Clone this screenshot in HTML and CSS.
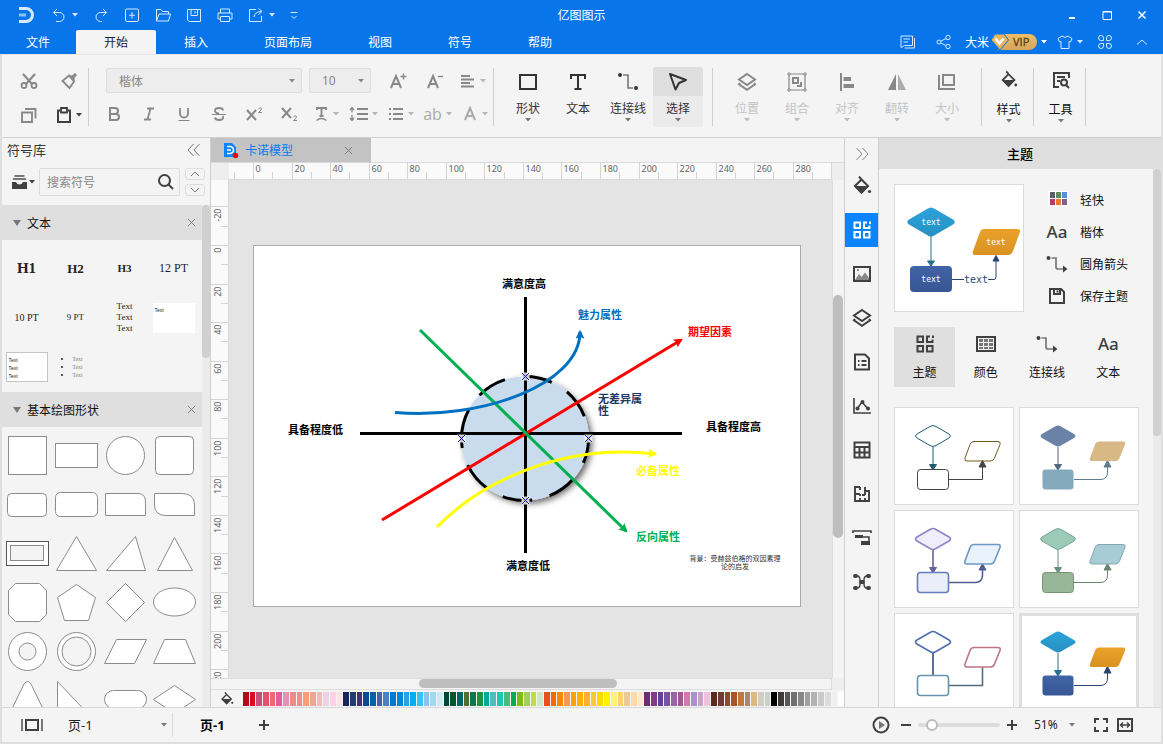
FILE: index.html
```html
<!DOCTYPE html>
<html lang="zh-CN">
<head>
<meta charset="utf-8">
<title>亿图图示</title>
<link rel="stylesheet" href="styles.css">
</head>
<body>
<svg class="defs" aria-hidden="true">
  <defs>
    <linearGradient id="g-blue" x1="0" y1="0" x2="0" y2="1"><stop offset="0" stop-color="#2ba3da"/><stop offset="1" stop-color="#2690c2"/></linearGradient>
    <linearGradient id="g-orange" x1="0" y1="0" x2="0" y2="1"><stop offset="0" stop-color="#eaa22b"/><stop offset="1" stop-color="#d99220"/></linearGradient>
    <linearGradient id="g-navy" x1="0" y1="0" x2="0" y2="1"><stop offset="0" stop-color="#4064a6"/><stop offset="1" stop-color="#385693"/></linearGradient>
    <linearGradient id="g-gold" x1="0" y1="0" x2="0" y2="1"><stop offset="0" stop-color="#f0bd64"/><stop offset="1" stop-color="#d4a55c"/></linearGradient>
  </defs>
  <symbol id="arrow" viewBox="0 0 6 4"><path d="M0 0H6L3 3.5Z" fill="currentColor"/></symbol>
  <symbol id="close" viewBox="0 0 10 10"><path d="M1 1L9 9M9 1L1 9"/></symbol>
  <symbol id="connector" viewBox="0 0 20 20"><g stroke="none" fill="currentColor"><circle cx="2" cy="3" r="2"/><circle cx="18" cy="16" r="2"/></g><path d="M5 3H10V16H15" stroke="#777" stroke-width="1.6"/></symbol>
  <symbol id="connector-arrow" viewBox="0 0 22 18"><g stroke="none" fill="currentColor"><circle cx="2.500" cy="3" r="2"/><path d="M17 10.500L21.500 14L17 17.500Z"/></g><path d="M5.500 3H10V12Q10 14 12 14H17" stroke="#777" stroke-width="1.700"/></symbol>
  <symbol id="layers" viewBox="0 0 20 20"><path d="M10 2L18 7.500L10 13L2 7.500Z"/><path d="M3 11L2 12.200L10 17.800L18 12.200L17 11"/></symbol>
  <symbol id="bucket" viewBox="0 0 20 20"><path d="M7 0.500L9.500 3.500M9.500 3.500L3 10L9.500 16.500L16 10Z"/><path d="M2 10H17L9.500 18Z" fill="currentColor" stroke="none"/><circle cx="17.500" cy="15.500" r="1.600" fill="currentColor" stroke="none"/></symbol>
  <symbol id="themes" viewBox="0 0 18 18"><path d="M1.500 1.500H7V7H1.500ZM1.500 11H7V16.500H1.500ZM11 11H16.500V16.500H11ZM14 1.500H11V7H16.500V4.500"/><path d="M16 0.500H18V3H16Z" fill="currentColor" stroke="none"/></symbol>
  <symbol id="disk" viewBox="0 0 16 16"><path d="M1 1H12L15 4V15H1ZM5 1V6H11V1M8.500 2.500V4.500"/></symbol>
  <symbol id="diagram" viewBox="0 0 120 98">
    <path class="t-down" d="M39 40V62"/><path class="t-down-head" d="M35.500 57.500H42.500L39 63Z"/><path class="t-up-head" d="M85 60H92L88.500 53.500Z"/>
    <path class="t-diamond" d="M36 19.500Q39 17.500 42 19.500L55 27Q58 29 55 31L42 38.500Q39 40.500 36 38.500L23 31Q20 29 23 27Z"/>
    <rect class="t-rect" x="23.500" y="62.500" width="31" height="20" rx="3"/>
    <path class="t-para" d="M80 34.500H104Q107 34.500 106 37.500L100.500 51Q99.500 54 96.500 54H73Q70 54 71 51L76 37.500Q77 34.500 80 34.500Z"/>
  </symbol>
</svg>

<header class="top">
  <div class="titlebar">
    <div class="quick">
      <svg class="logo" width="18" height="16" viewBox="0 0 18 16" aria-label="Edraw"><path d="M1 1.500H8A6.500 6.500 0 0 1 8 14.500H1" stroke-width="3"/><path d="M1 8H8" stroke-width="3" stroke="#8cc4f7"/></svg>
      <button class="combo" aria-label="撤销"><svg width="16" height="16"><path d="M6 2L2.500 5.500L6 9M3 5.500H8.500A4.500 4.500 0 0 1 8.500 14.500H5"/></svg><svg class="ar"><use href="#arrow"/></svg></button>
      <button aria-label="重做"><svg width="16" height="16"><path d="M10 2L13.500 5.500L10 9M13 5.500H7.500A4.500 4.500 0 0 0 7.500 14.500H9"/></svg></button>
      <button aria-label="新建"><svg width="16" height="16"><path d="M3 2H13Q14.500 2 14.500 3V13Q14.500 14.500 13 14.500H3Q1.500 14.500 1.500 13V3Q1.500 2 3 2ZM8 5V11.500M5 8.200H11"/></svg></button>
      <button aria-label="打开"><svg width="16" height="16"><path d="M1.500 14V2.500H6L7.500 4.500H13.500V7M1.500 14L4 7H15.500L13.500 14Z"/></svg></button>
      <button aria-label="保存"><svg width="16" height="16"><path d="M1.500 2.500H14.500V14.500H3L1.500 13ZM5 2.500V8.500H11.500V2.500M9 4V6.500"/></svg></button>
      <button aria-label="打印"><svg width="16" height="16"><path d="M3.500 6V2H12.500V6M3.500 12H1V6H15V12H12.500M3.500 9.500H12.500V14.500H3.500Z"/></svg></button>
      <button class="combo" aria-label="导出"><svg width="16" height="16"><path d="M8 2.500H1.500V14.500H13.500V9M6 10Q7 4.500 13.500 4.500M10.500 1.500L14 4.500L10.500 7.500"/></svg><svg class="ar"><use href="#arrow"/></svg></button>
      <button aria-label="自定义"><svg width="8" height="16"><path d="M0.500 5.500H7.500M1.500 9L4 11.500L6.500 9"/></svg></button>
    </div>
    <h1>亿图图示</h1>
    <div class="window">
      <button aria-label="最小化"><svg width="12" height="12"><path d="M3 9H9" stroke-width="2"/></svg></button>
      <button aria-label="最大化"><svg width="12" height="12"><path d="M2 2.500H10.500V10.500H2Z M2 3H10.500"/></svg></button>
      <button aria-label="关闭"><svg width="12" height="12"><path d="M2.500 2.500L9.500 9.500M9.500 2.500L2.500 9.500" stroke-width="1.600"/></svg></button>
    </div>
  </div>
  <nav class="menu">
    <button class="file">文件</button><button class="on">开始</button><button>插入</button><button>页面布局</button><button>视图</button><button>符号</button><button>帮助</button>
    <div class="account">
      <button aria-label="消息"><svg width="16" height="16"><path d="M1 2H12.500V11.500H4.500L1 13.500ZM3.500 5H10M3.500 8H8M14.500 4V14H4.500"/></svg></button>
      <button aria-label="分享" class="share"><svg width="16" height="16"><circle cx="3" cy="8" r="2"/><circle cx="12" cy="3.500" r="2.200"/><circle cx="12" cy="12.500" r="2.200"/><path d="M5 7L10 4.500M5 9L10 11.500"/></svg></button>
      <button class="combo vip"><span>大米</span><svg width="50" height="18"><path d="M11 1H40A8 8 0 0 1 40 17H9Z" fill="url(#g-gold)" stroke="none"/><path d="M6 1H15L19.500 7L11 17L2 7Z" fill="#e5b55f" stroke="#0876ea" stroke-width="1"/><path d="M6.500 5.500L10.500 10.500L14.500 5.500" stroke="#fff" stroke-width="2.500"/><text x="24" y="13">VIP</text></svg><svg class="ar"><use href="#arrow"/></svg></button>
      <button class="combo skin" aria-label="皮肤"><svg width="16" height="16"><path d="M5 2L1 4.500L2.500 8L4 7.500V14.500H12V7.500L13.500 8L15 4.500L11 2Q8 5 5 2Z"/></svg><svg class="ar"><use href="#arrow"/></svg></button>
      <button class="apps" aria-label="应用"><svg width="16" height="16"><path d="M6.500 6.500H4A2.500 2.500 0 1 1 6.500 4ZM9.500 6.500V4A2.500 2.500 0 1 1 12 6.500ZM6.500 9.500V12A2.500 2.500 0 1 1 4 9.500ZM9.500 9.500H12A2.500 2.500 0 1 1 9.500 12Z"/></svg></button>
      <button aria-label="收起功能区"><svg width="12" height="12"><path d="M1 8.500L6 4L11 8.500"/></svg></button>
    </div>
  </nav>
</header>

<div class="frame">
<section class="ribbon" aria-label="开始">
  <div class="clip">
    <button aria-label="剪切"><svg width="18" height="18"><path d="M3 2L12 12M15 2L6 12" stroke-width="2"/><circle cx="4" cy="13.500" r="2.500" stroke-width="1.800"/><circle cx="14" cy="13.500" r="2.500" stroke-width="1.800"/></svg></button>
    <button aria-label="格式刷"><svg width="18" height="18"><path d="M2.500 9L9 3.500L14 9.500L9.500 16Z" stroke-width="1.800"/><path d="M8 3L12 3.500L15 1L17 3L14.500 6L15 10Z" fill="currentColor" stroke="none"/></svg></button>
    <button aria-label="复制"><svg width="18" height="18"><path d="M2 6.500H12V16H2ZM5 3H15.500V12.500" stroke-width="1.900"/></svg></button>
    <button class="combo dark" aria-label="粘贴"><svg width="16" height="18"><path d="M2 4.500H14V16H2Z" stroke-width="2"/><path d="M5 2H11V6.500H5Z" fill="#f4f4f4" stroke-width="1.800"/></svg><svg class="ar"><use href="#arrow"/></svg></button>
  </div>
  <i class="sep"></i>
  <div class="font">
    <div class="row one">
      <label class="pick family"><select aria-label="字体"><option>楷体</option></select><svg class="ar"><use href="#arrow"/></svg></label>
      <label class="pick size"><select aria-label="字号"><option>10</option></select><svg class="ar"><use href="#arrow"/></svg></label>
      <button class="c37" aria-label="增大字号"><svg width="18" height="18"><path d="M1 16L6 4L11 16M3 12H9" stroke-width="2"/><path d="M10.500 4.500H16.500M13.500 1.500V7.500" stroke-width="1.400"/></svg></button>
      <button class="c37" aria-label="减小字号"><svg width="18" height="18"><path d="M1 16L6 4L11 16M3 12H9" stroke-width="2"/><path d="M11 4.500H16" stroke-width="1.400"/></svg></button>
      <button class="c37 combo" aria-label="对齐方式"><svg width="16" height="16"><path d="M1 3H10M1 6.500H14M1 10H10M1 13.500H14" stroke-width="1.900"/></svg><svg class="ar"><use href="#arrow"/></svg></button>
    </div>
    <div class="row two">
      <button class="c35" aria-label="加粗"><svg width="16" height="16"><path d="M4 2H9A3 3 0 0 1 9 8H4ZM4 8H10A3 3 0 0 1 10 14H4Z" stroke-width="2"/></svg></button>
      <button class="c35" aria-label="斜体"><svg width="16" height="16"><path d="M6 2.500H13M3 13.500H10M9.500 2.500L6.500 13.500" stroke-width="1.800"/></svg></button>
      <button class="c35" aria-label="下划线"><svg width="16" height="16"><path d="M4 2V7.500A4 4 0 0 0 12 7.500V2" stroke-width="1.800"/><path d="M2.500 14.500H13.500"/></svg></button>
      <button class="c35" aria-label="删除线"><svg width="16" height="16"><path d="M12 4.500A4 2.500 0 0 0 4 4.500Q4 7 8 7.500M12 10Q13 14 8 14Q4.500 14 4 11.500" stroke-width="1.800"/><path d="M1 8.500H15"/></svg></button>
      <button class="c35" aria-label="上标"><svg width="18" height="16"><path d="M2 4L11 14M11 4L2 14" stroke-width="2"/><path d="M13.500 3Q15 0.500 16.500 2.500Q17 4 13.500 6.500H17"/></svg></button>
      <button class="c35" aria-label="下标"><svg width="18" height="16"><path d="M2 2L11 12M11 2L2 12" stroke-width="2"/><path d="M13.500 11Q15 8.500 16.500 10.500Q17 12 13.500 14.500H17"/></svg></button>
      <i class="gap"></i>
      <button class="c37 combo" aria-label="文字效果"><svg width="15" height="16"><path d="M3 4V2H12V4M7.500 2V10M5.500 10H9.500" stroke-width="1.900"/><path d="M2.500 14.500Q7.500 10.500 12.500 14.500" stroke-width="1.400"/></svg><svg class="ar"><use href="#arrow"/></svg></button>
      <button class="c37 combo" aria-label="行距"><svg width="19" height="16"><path d="M8 3H19M8 8H19M8 13H19" stroke-width="2"/><path d="M3 2V6.500M1 4L3 1.500L5 4M3 9V14M1 12L3 14.500L5 12" stroke-width="1.300"/></svg><svg class="ar"><use href="#arrow"/></svg></button>
      <button class="c37 combo" aria-label="列表"><svg width="16" height="16"><path d="M5 3H15M5 8H15M5 13H15M1 3H3M1 8H3M1 13H3" stroke-width="2"/></svg><svg class="ar"><use href="#arrow"/></svg></button>
      <button class="c37 combo light"><span>ab</span><svg class="ar"><use href="#arrow"/></svg></button>
      <button class="c37 combo light" aria-label="字体颜色"><svg width="16" height="16"><path d="M3 14L8 2L13 14M5 10H11" stroke-width="2"/></svg><svg class="ar"><use href="#arrow"/></svg></button>
    </div>
  </div>
  <i class="sep"></i>
  <div class="big tools">
    <button><svg width="20" height="20"><path d="M2 3H18V17H2Z"/></svg>形状<svg class="ar"><use href="#arrow"/></svg></button>
    <button><svg width="20" height="20"><path d="M3 7V3H17V7M10 3V17M6.500 17H13.500"/></svg>文本</button>
    <button><svg width="20" height="20"><use href="#connector"/></svg>连接线<svg class="ar"><use href="#arrow"/></svg></button>
    <button class="on"><svg width="20" height="20"><path d="M2 2L18 8L11 11L7.500 17.500Z" stroke-linejoin="round"/></svg>选择<svg class="ar"><use href="#arrow"/></svg></button>
  </div>
  <i class="sep"></i>
  <div class="big off">
    <button><svg width="20" height="20"><use href="#layers"/></svg>位置<svg class="ar"><use href="#arrow"/></svg></button>
    <button><svg width="20" height="20"><path d="M2 2H18V18H2Z" stroke-width="1.200"/><path d="M1 1H3V3H1ZM17 1H19V3H17ZM1 17H3V19H1ZM17 17H19V19H17Z" stroke-width="1" fill="#f4f4f4"/><path d="M6 6H11V11H6ZM14 10V14H10"/></svg>组合<svg class="ar"><use href="#arrow"/></svg></button>
    <button><svg width="20" height="20"><path d="M4 1V19"/><path d="M6.500 5H14V9H6.500ZM6.500 12H17V16H6.500Z" fill="currentColor" stroke="none"/></svg>对齐<svg class="ar"><use href="#arrow"/></svg></button>
    <button><svg width="20" height="20"><path d="M9 2V18H1Z" fill="currentColor" stroke="none"/><path d="M11 2V18H19Z" fill="#ababab" stroke="none"/></svg>翻转<svg class="ar"><use href="#arrow"/></svg></button>
    <button><svg width="20" height="20"><path d="M6 3H17V13H6ZM2 3V17H18"/></svg>大小<svg class="ar"><use href="#arrow"/></svg></button>
  </div>
  <i class="sep"></i>
  <div class="big wide">
    <button><svg width="18" height="18"><use href="#bucket"/></svg>样式<svg class="ar"><use href="#arrow"/></svg></button>
    <i class="sep"></i>
    <button><svg width="20" height="20"><path d="M18 8V3H3V17H8M6 7H14M6 11H9"/><circle cx="13" cy="12.500" r="3"/><path d="M15 15L18 18"/></svg>工具<svg class="ar"><use href="#arrow"/></svg></button>
    <i class="sep"></i>
  </div>
</section>

<main class="work">
  <aside class="library">
    <header><h2>符号库</h2><button aria-label="折叠"><svg width="14" height="14"><path d="M6.500 1L1 7L6.500 13M12.500 1L7 7L12.500 13"/></svg></button></header>
    <div class="find">
      <button class="combo dark" aria-label="符号库菜单"><svg width="15" height="14"><path d="M2.500 1H12.500M1 4H14" stroke-width="2" stroke="#777"/><path d="M0 7H4Q5 9.500 7.500 9.500Q10 9.500 11 7H15V14H0Z" fill="currentColor" stroke="none"/></svg><svg class="ar"><use href="#arrow"/></svg></button>
      <label class="search"><input type="text" placeholder="搜索符号" aria-label="搜索符号"><svg width="16" height="16"><circle cx="6.500" cy="6.500" r="5.500"/><path d="M10.500 10.500L15 15"/></svg></label>
      <div class="updown"><button aria-label="上一个"><svg width="10" height="6"><path d="M1 5L5 1L9 5"/></svg></button><button aria-label="下一个"><svg width="10" height="6"><path d="M1 1L5 5L9 1"/></svg></button></div>
    </div>
    <div class="sheets">
      <div class="list">
        <h3><svg width="8" height="6"><path d="M0 0H8L4 6Z"/></svg>文本<button aria-label="关闭文本"><svg width="9" height="9"><use href="#close"/></svg></button></h3>
        <div class="grid texts">
          <b class="h1">H1</b><b class="h2">H2</b><b class="h3">H3</b><span class="p12">12 PT</span>
          <span class="p10">10 PT</span><span class="p9">9 PT</span><span class="lines">Text<br>Text<br>Text</span><span class="box">Text</span>
          <span class="box line">Text<br>Text<br>Text</span><ul><li>Text</li><li>Text</li><li>Text</li></ul>
        </div>
        <h3><svg width="8" height="6"><path d="M0 0H8L4 6Z"/></svg>基本绘图形状<button aria-label="关闭基本绘图形状"><svg width="9" height="9"><use href="#close"/></svg></button></h3>
        <div class="grid shapes">
          <svg><rect x="6.500" y="5.500" width="38" height="38"/></svg>
          <svg><rect x="4.500" y="12.500" width="42" height="24"/></svg>
          <svg><circle cx="25.500" cy="24.500" r="19"/></svg>
          <svg><rect x="6.500" y="5.500" width="38" height="38" rx="4"/></svg>
          <svg><rect x="5.500" y="13.500" width="39" height="23" rx="4"/></svg>
          <svg><rect x="4.500" y="12.500" width="42" height="24" rx="5"/></svg>
          <svg><path d="M5.500 13.500H38Q45.500 13.500 45.500 22V35.500H5.500Z"/></svg>
          <svg><path d="M5.500 13.500H33Q45.500 13.500 45.500 25V35.500H17Q5.500 35.500 5.500 25Z"/></svg>
          <svg><rect x="4.500" y="12.500" width="42" height="24" stroke="#555"/><rect x="8.500" y="16.500" width="33" height="15" fill="#f4f4f4"/></svg>
          <svg><path d="M25.500 7.500L45.500 41.500H5.500Z"/></svg>
          <svg><path d="M35.500 7.500L45.500 41.500H6.500Z"/></svg>
          <svg><path d="M25.500 8.500L43.500 41.500H8.500Z"/></svg>
          <svg><path d="M13.500 5.500H37.500L44.500 12.500V36.500L37.500 43.500H13.500L6.500 36.500V12.500Z"/></svg>
          <svg><path d="M25.500 6.500L44.500 19.500L37.500 42.500H13.500L6.500 19.500Z"/></svg>
          <svg><path d="M25.500 5.500L44.500 24.500L25.500 43.500L6.500 24.500Z"/></svg>
          <svg><ellipse cx="25.500" cy="24" rx="21" ry="14"/></svg>
          <svg><circle cx="25.500" cy="24.500" r="19"/><circle cx="25.500" cy="24.500" r="8.500" fill="#f4f4f4"/></svg>
          <svg><circle cx="25.500" cy="24.500" r="19"/><circle cx="25.500" cy="24.500" r="14.500" fill="#f4f4f4"/></svg>
          <svg><path d="M16.500 12.500H46.500L34.500 36.500H4.500Z"/></svg>
          <svg><path d="M15.500 12.500H36.500L46.500 36.500H4.500Z"/></svg>
          <svg><path d="M5 43L22 8Q25.500 3 29 8L46 43Z"/></svg>
          <svg><path d="M6.500 5.500L42.500 43.500H6.500Z"/></svg>
          <svg><rect x="4.500" y="14.500" width="42" height="18" rx="9"/></svg>
          <svg><path d="M25.500 9.500L46.500 23.500L25.500 37.500L4.500 23.500Z"/></svg>
        </div>
      </div>
      <div class="track"><i></i></div>
    </div>
  </aside>

  <section class="editor">
    <div class="tabs"><div class="tab"><svg width="16" height="17"><path d="M1 1H9L13 5V15H1Z" fill="#0a84ff"/><path d="M4 4.500H7A3.500 3.500 0 0 1 7 11.500H4M4 8H8" fill="none" stroke="#fff" stroke-width="1.600"/><circle cx="12.500" cy="13.500" r="2.800" fill="red"/></svg><span>卡诺模型</span><button aria-label="关闭卡诺模型"><svg width="9" height="9"><use href="#close"/></svg></button></div></div>
    <div class="desk">
      <i class="corner"></i>
      <svg class="ruler across" id="ruler-x"></svg>
      <i class="corner"></i>
      <svg class="ruler down" id="ruler-y"></svg>
      <div class="canvas">
        <svg class="page" width="548" height="362" viewBox="254 246 546 360">
          <defs>
            <filter id="soft" x="-20%" y="-20%" width="140%" height="140%"><feDropShadow dx="3" dy="3" stdDeviation="3" flood-opacity=".6"/></filter>
            <marker id="tip" viewBox="0 0 8 8" refX="6" refY="4" markerWidth="9" markerHeight="9" markerUnits="userSpaceOnUse" orient="auto"><path d="M0 0L8 4L0 8L1.500 4Z" fill="context-stroke" stroke="none"/></marker>
            <g id="handle"><path d="M-4 -4H4V4H-4Z" fill="#fff" stroke="none" opacity=".8"/><path d="M-3.500 -3.500L3.500 3.500M3.500 -3.500L-3.500 3.500"/></g>
          </defs>
          <ellipse cx="525" cy="438.500" rx="64" ry="62" fill="#c9dcee" stroke="none" filter="url(#soft)"/>
          <path d="M461.500 438.500A63.500 62 0 0 1 588.500 438.500A63.500 62 0 0 1 461.500 438.500" stroke="#000" stroke-width="3" stroke-dasharray="30 18"/>
          <path d="M525.500 297V553M360 433.500H682" stroke="#000" stroke-width="3"/>
          <g stroke-width="3">
            <path d="M382 520L681 340" stroke="#f00" marker-end="url(#tip)"/>
            <path d="M420 330L626 531" stroke="#00b050" marker-end="url(#tip)"/>
            <path d="M395 412.500C480 420 580 385 580 332" stroke="#0070c0" marker-end="url(#tip)"/>
            <path d="M437 527C480 483 560 443 655 454" stroke="#ff0" marker-end="url(#tip)"/>
          </g>
          <g class="handles"><use href="#handle" x="525.500" y="376.500"/><use href="#handle" x="461.500" y="438.500"/><use href="#handle" x="588.500" y="438.500"/><use href="#handle" x="525.500" y="500.500"/></g>
          <g class="labels">
            <text x="502" y="288">满意度高</text><text x="506" y="570">满意度低</text>
            <text x="288" y="434">具备程度低</text><text x="706" y="431">具备程度高</text>
            <text x="578" y="319" fill="#0070c0">魅力属性</text><text x="688" y="336" fill="#f00">期望因素</text>
            <text x="598" y="403" fill="#1f3864">无差异属<tspan x="598" y="415">性</tspan></text>
            <text x="636" y="475" fill="#ff0">必备属性</text><text x="636" y="541" fill="#00b050">反向属性</text>
          </g>
          <text class="note" x="735" y="561">背景：受赫兹伯格的双因素理<tspan x="735" y="569">论的启发</tspan></text>
        </svg>
      </div>
      <div class="vbar"><i></i></div>
      <div class="hbar"><i></i></div>
      <i class="corner"></i>
      <div class="colors"><svg width="14" height="14"><use href="#bucket"/></svg><div id="swatches"></div></div>
    </div>
  </section>

  <nav class="dock">
    <button class="fold" aria-label="折叠面板"><svg width="14" height="14"><path d="M1.500 1L7 7L1.500 13M7.500 1L13 7L7.500 13"/></svg></button>
    <button aria-label="填充"><svg width="20" height="20"><use href="#bucket"/></svg></button>
    <button class="on" aria-label="主题"><svg width="18" height="18"><use href="#themes"/></svg></button>
    <button aria-label="图片"><svg width="20" height="18"><path d="M2 2H18V16H2Z"/><path d="M3 15L7 9L9.500 12L13 7.500L17 13V15Z" fill="#888" stroke="none"/><path d="M5 5H7" stroke="#888"/></svg></button>
    <button aria-label="图层"><svg width="20" height="20"><use href="#layers"/></svg></button>
    <button aria-label="文档"><svg width="18" height="18"><path d="M2 1.500H12L16 5.500V16.500H2ZM5 8H6.500M8.500 8H13.500M5 12H6.500M8.500 12H13.500"/></svg></button>
    <button aria-label="图表"><svg width="20" height="18"><path d="M2 1V16H19M5 12L10 5L16 12" stroke-width="1.600"/><g fill="currentColor" stroke="none"><circle cx="5.500" cy="11.500" r="2"/><circle cx="10.500" cy="5" r="2"/><circle cx="16" cy="11.500" r="2"/></g></svg></button>
    <button aria-label="表格"><svg width="18" height="18"><path d="M1.500 1.500H16.500V16.500H1.500ZM1.500 6H16.500M1.500 11.500H16.500M6.500 6V16.500M11.500 6V16.500"/></svg></button>
    <button aria-label="平面图"><svg width="18" height="18"><path d="M7 2H2V16H16V6H12M7 2V5M12 2V10M12 6H16M2 9H7M7 9V11M7 16V13M12 13V16M9 10H12" stroke-width="1.900"/></svg></button>
    <button aria-label="时间线"><svg width="20" height="18"><path d="M1 4V2H19V4M11 8H17V14" stroke-width="1.600"/><path d="M3 6H11V9H3ZM9 12H18V16H9Z" fill="currentColor" stroke="none"/></svg></button>
    <button aria-label="思维导图"><svg width="20" height="18"><path d="M5 3Q8 3 8 7L8 11Q8 15 5 15M15 3Q12 3 12 7L12 11Q12 15 15 15" stroke-width="1.400"/><g fill="currentColor" stroke="none"><rect x="1" y="1" width="5" height="4" rx="2"/><rect x="14" y="1" width="5" height="4" rx="2"/><rect x="1" y="13" width="5" height="4" rx="2"/><rect x="14" y="13" width="5" height="4" rx="2"/><rect x="7.500" y="7" width="5" height="4" rx="1"/></g></svg></button>
  </nav>

  <aside class="panel">
    <h2>主题</h2>
    <div class="scroll">
      <div class="inner">
        <div class="current">
          <svg class="preview" width="128" height="126" viewBox="1 1 128 126">
            <g stroke="#27708f" fill="#27708f"><path d="M37 52V77"/><path d="M33.500 77H40.500L37 82Z"/></g>
            <g stroke="#2c4372" fill="none"><path d="M58 95.500H70M94 95.500H100Q102 95.500 102 93V76"/><path d="M99 77H105L102 71.500Z" fill="#2c4372"/></g>
            <path d="M33 25Q37 22 41 25L59 35.500Q62.500 38 59 40.500L41 51Q37 54 33 51L15 40.500Q11.500 38 15 35.500Z" fill="url(#g-blue)"/>
            <rect x="16" y="82" width="42" height="26" rx="4" fill="url(#g-navy)"/>
            <path d="M90 45H123Q127 45 126 48L119 67Q117.500 71 114 71H81Q77.500 71 79 67L86 48Q87 45 90 45Z" fill="url(#g-orange)"/>
            <text x="37" y="41">text</text><text x="37" y="98">text</text><text x="102" y="61">text</text><text class="dark" x="82" y="99">text</text>
          </svg>
          <div class="props">
            <button><svg width="22" height="18" viewBox="-2 0 22 18"><path d="M0 0H20V16H0Z" fill="#fff" stroke="none"/><g stroke="none"><path d="M2 1H7V7H2Z" fill="#596066"/><path d="M8 1H13V7H8Z" fill="#588f5c"/><path d="M14 1H19V7H14Z" fill="#5191dc"/><path d="M2 8H7V14H2Z" fill="#b53f62"/><path d="M8 8H13V14H8Z" fill="#f0792e"/><path d="M14 8H19V14H14Z" fill="#7d6289"/></g></svg>轻快</button>
            <button><span class="aa">Aa</span>楷体</button>
            <button><svg width="22" height="18"><use href="#connector-arrow"/></svg>圆角箭头</button>
            <button><svg width="22" height="16"><use href="#disk"/></svg>保存主题</button>
          </div>
        </div>
        <div class="kinds">
          <button class="on"><svg width="22" height="18"><use href="#themes"/></svg>主题</button>
          <button><svg width="20" height="18"><path d="M1 2H19V16H1Z"/><path d="M3 4H7V7H3ZM8 4H12V7H8ZM13 4H17V7H13ZM3 8H7V11H3ZM8 8H12V11H8ZM13 8H17V11H13ZM3 12H7V14H3ZM8 12H12V14H8ZM13 12H17V14H13Z" fill="#777" stroke="none"/></svg>颜色</button>
          <button><svg width="22" height="18"><use href="#connector-arrow"/></svg>连接线</button>
          <button><span class="aa">Aa</span>文本</button>
        </div>
        <div class="cards">
          <button class="t1" aria-label="主题 1"><svg viewBox="0 0 120 98"><path class="t-elbow" d="M55 72.500H88.500V58"/><use href="#diagram"/></svg></button>
          <button class="t2" aria-label="主题 2"><svg viewBox="0 0 120 98"><path class="t-elbow" d="M55 72.500H82Q88.500 72 88.500 65V58"/><use href="#diagram"/></svg></button>
          <button class="t3" aria-label="主题 3"><svg viewBox="0 0 120 98"><path class="t-elbow" d="M55 72.500H82Q88.500 72 88.500 65V58"/><use href="#diagram"/></svg></button>
          <button class="t4" aria-label="主题 4"><svg viewBox="0 0 120 98"><path class="t-elbow" d="M55 72.500H82Q88.500 72 88.500 65V58"/><use href="#diagram"/></svg></button>
          <button class="t5" aria-label="主题 5"><svg viewBox="0 0 120 98"><path class="t-elbow" d="M55 72.500H88.500V54"/><use href="#diagram"/></svg></button>
          <button class="t6 on" aria-label="主题 6"><svg viewBox="0 0 120 98"><path class="t-elbow" d="M55 72.500H82Q88.500 72 88.500 65V58"/><use href="#diagram"/></svg></button>
        </div>
      </div>
      <div class="track"><i></i></div>
    </div>
  </aside>
</main>

<footer class="status">
  <button aria-label="页面视图"><svg width="22" height="16"><path d="M5 3H17V13H5Z" stroke-width="2"/><path d="M1 2V14M21 2V14" stroke="#777"/></svg></button>
  <label class="pick pages"><select aria-label="页面"><option>页-1</option></select><svg class="ar"><use href="#arrow"/></svg></label>
  <button class="current-page">页-1</button>
  <button aria-label="添加页面"><svg width="12" height="12"><path d="M6 1V11M1 6H11"/></svg></button>
  <div class="view">
    <button aria-label="放映"><svg width="18" height="18"><circle cx="9" cy="9" r="7.500"/><path d="M7 5L13 9L7 13Z" fill="#777" stroke="none"/></svg></button>
    <button class="minus" aria-label="缩小"><svg width="12" height="12"><path d="M1 6H11"/></svg></button>
    <input type="range" min="0" max="100" value="11" aria-label="缩放">
    <button aria-label="放大"><svg width="12" height="12"><path d="M6 1V11M1 6H11"/></svg></button>
    <label class="pick zoom"><select aria-label="缩放比例"><option>51%</option></select><svg class="ar"><use href="#arrow"/></svg></label>
    <button class="full" aria-label="全屏"><svg width="16" height="16"><path d="M2 6V2H6M10 2H14V6M14 10V14H10M6 14H2V10"/></svg></button>
    <button aria-label="适应宽度"><svg width="16" height="16"><path d="M1 2H15V14H1Z"/><path d="M3 8H13M6 5.500L3.500 8L6 10.500M10 5.500L12.500 8L10 10.500" stroke-width="1.400"/></svg></button>
  </div>
</footer>
</div>
<script src="app.js"></script>
</body>
</html>
```
FILE: styles.css
```css
* { box-sizing: border-box; }
body { margin: 0; height: 100vh; display: flex; flex-direction: column; overflow: hidden; background: #f4f4f4; color: #222; font: 12px/16px "Noto Sans CJK SC", sans-serif; }
.defs { position: absolute; width: 0; height: 0; }
h1, h2, h3, ul { margin: 0; padding: 0; font-size: 12px; font-weight: 400; }
button, input, select { font: inherit; color: inherit; border: 0; background: none; padding: 0; margin: 0; }
button { display: flex; align-items: center; justify-content: center; flex: none; white-space: nowrap; }
svg { fill: none; stroke: currentColor; flex: none; display: block; }
svg.ar { width: 6px; height: 4px; stroke: none; }
.combo { gap: 4px; }
select { appearance: none; outline: 0; width: 100%; }
.pick { display: grid; grid-template-columns: 1fr auto; align-items: center; }

/* title and menu */
.top { background: #0876ea; color: #fff; flex: none; }
.titlebar { display: grid; grid-template-columns: 1fr auto 1fr; height: 30px; align-items: center; }
.quick { display: flex; gap: 15px; padding-left: 18px; align-items: center; color: #d7eaff; }
.quick .combo { gap: 5px; }
.window { display: flex; justify-content: flex-end; gap: 23px; padding-right: 15px; }
.menu { display: flex; height: 24px; }
.menu > button { padding: 0 28px; }
.menu > .file { padding: 0 26px; }
.menu > .on { background: #f4f4f4; color: #222; border-radius: 2px 2px 0 0; }
.account { margin-left: auto; display: flex; align-items: center; padding-right: 15px; color: #d7eaff; }
.account .share { margin: 0 13px 0 20px; }
.account .vip { gap: 0; color: #fff; }
.account .vip .ar { margin-left: 2px; }
.account .skin { margin: 0 14px 0 10px; }
.account .apps { margin-right: 23px; }
.vip text { font: 11px "Open Sans", sans-serif; fill: #5d3f10; stroke: #5d3f10; stroke-width: .3px; }

.frame { flex: 1; min-height: 0; display: flex; flex-direction: column; border: solid #dfdfdf; border-width: 0 2px 2px; }

/* ribbon */
.ribbon { display: flex; height: 84px; flex: none; padding: 13px 0 10px 7px; border-top: 1px solid #e4e4e4; border-bottom: 1px solid #d0d0d0; color: #888; }
.sep { width: 1px; background: #cfcfcf; height: 58px; flex: none; }
.clip { display: grid; grid-template: 25px 25px / 40px 40px; row-gap: 9px; }
.clip + .sep { margin-right: 7px; margin-left: -1px; }
.dark { color: #404040; }
.light { color: #aaa; }
.font { display: flex; flex-direction: column; gap: 8px; width: 397px; }
.row { display: flex; height: 25px; }
.one { padding-left: 10px; }
.one .pick { height: 25px; border: 1px solid #dcdcdc; border-radius: 2px; background: #ededed; padding: 0 6px 0 12px; margin-right: 7px; }
.one .family { width: 196px; }
.one .size { width: 62px; margin-right: 9px; font-family: "Noto Sans", sans-serif; }
.c35 { width: 35px; }
.c37 { width: 37px; }
.c37 .ar { color: #b5b5b5; }
.gap { width: 4px; }
.light span { font: 16px/16px "Open Sans", sans-serif; }
.big { display: flex; color: #404040; margin-top: -1px; height: 60px; }
.big button { width: 50px; flex-direction: column; justify-content: flex-start; padding-top: 5px; line-height: 16px; color: #333; }
.big button > svg:first-child { margin-bottom: 8px; height: 20px; stroke-width: 2; }
.tools { margin: -1px 9px 0; }
.big .on { background: linear-gradient(#dedede 29px, #ebebeb 29px); border-radius: 3px; }
.off { margin: -1px 9px 0; }
.off button { color: #c4c4c4; }
.off button > svg:first-child { color: #888; }
.wide button { width: 51px; padding-left: 2px; color: #111; }
.wide { margin-top: 0; }
.wide button > svg:first-child { color: #404040; margin-top: -3px; margin-bottom: 11px; }
.big .ar { color: #777; margin-top: 2px; }
.off .ar { color: #bbb; }

/* symbol library */
.work { flex: 1; min-height: 0; display: flex; }
.library { width: 209px; flex: none; display: flex; flex-direction: column; border-right: 1px solid #d0d0d0; }
.library header { display: flex; justify-content: space-between; padding: 4px 9px 0 5px; height: 25px; color: #777; }
.library header button { height: 16px; }
.library h2 { font-size: 13px; color: #333; }
.find { display: flex; padding: 5px 5px 9px 10px; height: 42px; }
.find > .combo { gap: 2px; margin-right: 4px; }
.search { display: flex; align-items: center; flex: 1; min-width: 0; border: 1px solid #dcdcdc; border-radius: 2px; padding: 0 5px 0 7px; color: #404040; }
.search input { flex: 1; min-width: 0; outline: 0; }
.search input::placeholder { color: #888; }
.search svg { stroke-width: 2; }
.updown { display: flex; flex-direction: column; gap: 4px; margin-left: 5px; }
.updown button { width: 20px; height: 12px; border: 1px solid #ddd; border-radius: 3px; color: #777; }
.sheets { display: flex; flex: 1; min-height: 0; overflow: hidden; }
.list { flex: 1; overflow: hidden; }
.list h3 { height: 35px; background: #dfdfdf; display: flex; align-items: center; padding: 0 6px 0 11px; gap: 6px; color: #111; }
.list h3 > svg { fill: #777; stroke: none; }
.list h3 button { margin-left: auto; color: #777; }
.track { width: 8px; background: #ebebeb; }
.track i { display: block; background: #d0d0d0; border-radius: 4px; height: 153px; }
.grid { display: grid; grid-template-columns: repeat(4, 49px); grid-auto-rows: 49px; }
.texts { padding: 4px 0 1px; place-items: center; font: 12px/11px "Liberation Serif", serif; color: #222; }
.h1 { font-size: 15px; }
.h2 { font-size: 13px; }
.h3 { font-size: 11px; }
.p10 { font-size: 10px; }
.p9, .lines { font-size: 9px; }
.box { width: 42px; height: 30px; background: #fff; font: 5px/8px "Liberation Sans", sans-serif; padding: 3px 2px; }
.box.line { border: 1px solid #c4c4c4; }
.texts ul { font-size: 6px; line-height: 8px; color: #888; padding-left: 4px; }
.texts li::marker { color: #222; font-size: 7px; }
.shapes { padding-top: 4px; overflow: hidden; }
.shapes svg { width: 49px; height: 49px; fill: #fff; stroke: #8c8c8c; }

/* editor */
.editor { flex: 1; min-width: 0; display: flex; flex-direction: column; }
.tabs { height: 25px; border-bottom: 1px solid #dadada; display: flex; }
.tab { width: 160px; background: #c3c3c3; display: flex; align-items: center; padding: 0 18px 0 12px; gap: 6px; color: #0a7cf5; }
.tab svg { stroke: none; }
.tab button { margin-left: auto; color: #777; }
.tab button svg { stroke: currentColor; }
.desk { flex: 1; min-height: 0; display: grid; grid-template: 17px minmax(0, 1fr) 12px 17px / 18px minmax(0, 1fr) 12px; }
.corner { background: #eee; }
.ruler { width: 100%; height: 100%; background: #fafafa; stroke: #d4d4d4; font: 9px "Noto Sans", sans-serif; }
.ruler text { fill: #666; stroke: none; }
.across { border-bottom: 1px solid #d8d8d8; }
.down { border-right: 1px solid #d8d8d8; }
.canvas { background: #e4e4e4; overflow: hidden; padding: 65px 0 0 24px; }
.page { background: #fff; border: 1px solid #aaa; }
.handles { stroke: #0b0baf; }
.labels { font: 700 11px "Noto Sans CJK SC", sans-serif; fill: #000; stroke: none; }
.note { font: 7px "Noto Sans CJK SC", sans-serif; fill: #333; stroke: none; text-anchor: middle; }
.vbar { background: #f4f4f4; border-left: 1px solid #ddd; }
.vbar i { display: block; width: 10px; height: 243px; margin-top: 115px; border-radius: 5px; background: #bebebe; }
.hbar { grid-column: 1 / 3; border: solid #ddd; border-width: 1px 1px 1px 0; }
.hbar i { display: block; width: 198px; height: 9px; margin-left: 208px; border-radius: 5px; background: #bebebe; }
.colors { grid-column: 1 / 4; display: flex; color: #404040; align-items: center; padding-left: 9px; }
.colors > svg { stroke-width: 2; }
#swatches { flex: 1; display: flex; gap: 1px; height: 14px; margin-left: 9px; }
#swatches i { flex: 1; }

/* icon dock */
.dock { width: 35px; flex: none; border: solid #d0d0d0; border-width: 0 1px; display: flex; flex-direction: column; gap: 10px; color: #404040; }
.dock button { height: 34px; }
.dock .fold { height: 31px; margin-bottom: -10px; color: #888; }
.dock button:not(.fold) svg { stroke-width: 2; }
.dock .on { background: #0a84ff; color: #fff; }

/* theme panel */
.panel { width: 282px; flex: none; display: flex; flex-direction: column; color: #111; }
.panel h2 { height: 31px; background: #dfdfdf; font-size: 13px; line-height: 32px; font-weight: 500; text-align: center; color: #000; }
.scroll { flex: 1; min-height: 0; display: flex; overflow: hidden; }
.panel .track i { height: 267px; }
.inner { flex: 1; padding: 15px 14px 0 15px; overflow: hidden; }
.current { display: flex; gap: 22px; }
.preview { box-sizing: content-box; border: 1px solid #dcdcdc; background: #fff; stroke: none; }
.preview text { font: 8px "DejaVu Sans Mono", monospace; fill: #fff; text-anchor: middle; }
.preview text.dark { font-size: 10px; fill: #2c4372; }
.props button { height: 32px; gap: 12px; }
.props svg, .kinds svg { color: #404040; stroke-width: 2; }
.aa { width: 22px; text-align: center; color: #404040; font: 500 17px/18px "Noto Sans", sans-serif; }
.kinds { display: grid; grid-template-columns: repeat(4, 1fr); margin: 15px 0 20px; }
.kinds button { height: 60px; flex-direction: column; gap: 11px; }
.kinds .on { background: #dfdfdf; }
.cards { display: grid; grid-template-columns: 1fr 1fr; gap: 5px; }
.cards button { height: 98px; background: #fff; box-shadow: inset 0 0 0 1px #dcdcdc; --w: 1px; --r: none; --d: none; --p: none; }
.cards .on { box-shadow: inset 0 0 0 3px #dfdfdf; }
.cards svg { width: 120px; height: 98px; }
.t-diamond { fill: var(--d); stroke: var(--ds); stroke-width: var(--w); }
.t-rect { fill: var(--r); stroke: var(--rs); stroke-width: var(--w); }
.t-para { fill: var(--p); stroke: var(--ps); stroke-width: var(--w); }
.t-down { stroke: var(--a); stroke-width: var(--w); }
.t-down-head { fill: var(--head, var(--a)); stroke: var(--head, var(--a)); }
.t-up-head { fill: var(--head, var(--b)); stroke: var(--head, var(--b)); }
.t-elbow { stroke: var(--b); stroke-width: var(--w); }
.t1 { --ds: #205b72; --rs: #444; --ps: #705a25; --a: #205b72; --b: #444; }
.cards .t2 { --d: #6982a5; --r: #84aabd; --p: #d8b884; --ds: none; --rs: none; --ps: none; --a: #52677e; --b: #607d8d; }
.cards .t3 { --w: 1.6px; --d: #f0eefb; --r: #e9eef9; --p: #e9f1fa; --ds: #8e86cb; --rs: #667dbb; --ps: #6c98c5; --a: #69609b; --b: #505e94; }
.cards .t4 { --d: #9ccab8; --r: #98b798; --p: #a8ccd5; --ds: #77a391; --rs: #739573; --ps: #81a8b2; --a: #6a8e7e; --b: #68846e; }
.cards .t5 { --w: 1.6px; --head: none; --ds: #4e70ac; --rs: #6992ac; --ps: #bd7584; --a: #344c82; --b: #526f82; }
.cards .t6 { --d: url(#g-blue); --r: url(#g-navy); --p: url(#g-orange); --ds: none; --rs: none; --ps: none; --a: #27708f; --b: #2c4372; }

/* status bar */
.status { height: 35px; flex: none; border-top: 1px solid #d8d8d8; display: flex; align-items: center; padding: 0 28px 0 19px; color: #404040; font: 13px/16px "Noto Sans", "Noto Sans CJK SC", sans-serif; }
.status button { stroke-width: 2; }
.pages { width: 119px; height: 24px; margin-left: 11px; padding: 0 5px 0 14px; border-right: 1px solid #dadada; color: #222; }
.status .ar { color: #777; }
.current-page { font-weight: 700; color: #000; margin: 0 33px 0 27px; }
.view { margin-left: auto; display: flex; align-items: center; }
.minus { margin: 0 6px 0 10px; }
.view input { appearance: none; width: 82px; height: 12px; margin-right: 6px; }
.view input::-webkit-slider-runnable-track { height: 4px; background: #dcdcdc; border-radius: 2px; }
.view input::-webkit-slider-thumb { appearance: none; width: 12px; height: 12px; margin-top: -4px; border: 2px solid #bbb; border-radius: 50%; background: #fff; }
.zoom { width: 57px; padding-left: 16px; color: #222; }
.zoom select { font-size: 12px; }
.full { margin: 0 8px 0 18px; }
```
FILE: app.js
```javascript
const colors = `b10c1c df0a24 c94f7c e8506a ee6a70 e55c9b e095b5 ee8c85 f08e98 ff9c78 f0a893 f5bbbb ead3e6 fdd2e5 ffe0e5
14265a 243a74 453078 064a90 0064a8 4463b0 4e80c4 0079d0 0088d4 2ba2e0 00aef3 33c5f8 8dc2ec 9fdaf0 cfe9f5
00453a 00572d 006666 556b2f 0a7a4c 1b9440 00aa9a 50bcc0 1dc9b0 4cb97d 00b050 7ebb13 a2cf5c bfdc40 cbe8c8
e84e20 f26a00 f58a05 f39955 f5a305 ffb000 ffb030 fcc935 ffd900 fff000 fcf17c ffd26c ebcb95 ffdaa8 ffe8d0
6c2d73 813a83 67409b 7a559f 9966a3 a3588f cf7ab0 aa92cf c8a4cb ecc2dc 5c2a1d 733a2f 8e4b2c a85628 c07740 b28468 dcb985 d5ccc5 c9d2ca
000000 403a3a 585858 707070 888888 a0a0a0 b0b4b2 cacaca dcdcdc efefef ffffff`.split(/\s+/);
document.getElementById('swatches').innerHTML = colors.map(c => `<i style="background:#${c}"></i>`).join('');

// One major tick every 20 mm, a short one halfway between.
const STEP = 38.55;
function ruler(id, origin, vertical) {
  const el = document.getElementById(id);
  const box = el.getBoundingClientRect();
  const length = vertical ? box.height : box.width;
  let out = '';
  for (let n = -1; origin + n * STEP < length; n++) {
    const at = Math.round(origin + n * STEP) + 0.5;
    const mid = Math.round(origin + (n + 0.5) * STEP) + 0.5;
    out += vertical
      ? `<path d="M0 ${at}H18M10 ${mid}H18"/>`
      : `<path d="M${at} 0V17M${mid} 9V17"/>`;
    if (vertical) out += `<text transform="translate(10 ${at + 2}) rotate(-90)" text-anchor="end">${n * 20}</text>`;
    else if (n >= 0) out += `<text x="${at + 2}" y="9">${n * 20}</text>`;
  }
  el.innerHTML = out;
}
ruler('ruler-x', 24, false);
ruler('ruler-y', 65, true);
```
